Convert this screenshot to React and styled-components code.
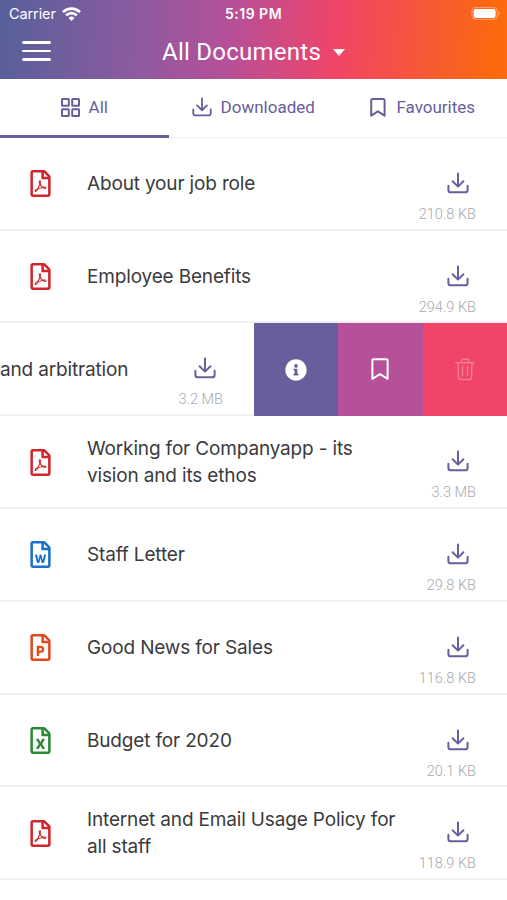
import styled, { createGlobalStyle } from 'styled-components'
import {
  FaInfoCircle,
  FaRegFileExcel,
  FaRegFilePdf,
  FaRegFilePowerpoint,
  FaRegFileWord
} from 'react-icons/fa'

const FILE_TYPES = {
  pdf: { Icon: FaRegFilePdf, color: '#d0252c' },
  word: { Icon: FaRegFileWord, color: '#1a70ca' },
  powerpoint: { Icon: FaRegFilePowerpoint, color: '#e04a1c' },
  excel: { Icon: FaRegFileExcel, color: '#2c8a35' }
}

const DOCUMENTS = [
  { type: 'pdf', lines: ['About your job role'], size: '210.8 KB' },
  { type: 'pdf', lines: ['Employee Benefits'], size: '294.9 KB' },
  { type: 'pdf', lines: ['and arbitration'], size: '3.2 MB', swiped: true },
  { type: 'pdf', lines: ['Working for Companyapp - its', 'vision and its ethos'], size: '3.3 MB' },
  { type: 'word', lines: ['Staff Letter'], size: '29.8 KB' },
  { type: 'powerpoint', lines: ['Good News for Sales'], size: '116.8 KB' },
  { type: 'excel', lines: ['Budget for 2020'], size: '20.1 KB' },
  { type: 'pdf', lines: ['Internet and Email Usage Policy for', 'all staff'], size: '118.9 KB' }
]

function DownloadIcon({ size = 22 }) {
  return (
    <StrokeIcon width={size} height={size} viewBox="0 0 22 22">
      <path d="M11 1.5v13M5.6 9.3l5.4 5.3 5.4-5.3M1.4 13.7v4.2a2.4 2.4 0 0 0 2.4 2.4h14.4a2.4 2.4 0 0 0 2.4-2.4v-4.2" />
    </StrokeIcon>
  )
}

function GridIcon() {
  return (
    <StrokeIcon width="19" height="19" viewBox="0 0 19 19">
      <rect x="1" y="1" width="6.8" height="6.8" rx="0.6" />
      <rect x="11.2" y="1" width="6.8" height="6.8" rx="0.6" />
      <rect x="1" y="11.2" width="6.8" height="6.8" rx="0.6" />
      <rect x="11.2" y="11.2" width="6.8" height="6.8" rx="0.6" />
    </StrokeIcon>
  )
}

function BookmarkIcon() {
  return (
    <StrokeIcon width="18" height="19" viewBox="0 0 18 19">
      <path d="M2.5 1h10.8a1.3 1.3 0 0 1 1.3 1.3v15.4l-6.7-4.4-6.7 4.4V2.3A1.3 1.3 0 0 1 2.5 1z" />
    </StrokeIcon>
  )
}

function SquareBookmarkIcon() {
  return (
    <StrokeIcon width="18" height="23" viewBox="0 0 18 23">
      <path d="M2.3 1.2h13.4a.9.9 0 0 1 .9.9v18.7L9 16.2l-7.6 4.6V2.1a.9.9 0 0 1 .9-.9z" />
    </StrokeIcon>
  )
}

function TrashIcon() {
  return (
    <StrokeIcon width="20" height="23" viewBox="0 0 20 23" strokeWidth="1.5">
      <path d="M.8 4.8h18.4M3 5l.6 15.2a1.4 1.4 0 0 0 1.4 1.3h10a1.4 1.4 0 0 0 1.4-1.3L17 5M6 4.6l.7-2.5a1.2 1.2 0 0 1 1.2-.9h4.2a1.2 1.2 0 0 1 1.2.9l.7 2.5M7.5 8.5v9M12.5 8.5v9" />
    </StrokeIcon>
  )
}

function WifiIcon() {
  return (
    <svg width="19" height="14" viewBox="0 0 19 14" fill="none" stroke="#fff" strokeWidth="2.7">
      <path d="M1 5.1a12.2 12.2 0 0 1 17 0M4.1 8.4a7.7 7.7 0 0 1 10.8 0" />
      <path d="M9.5 14l-3-3.1a4.4 4.4 0 0 1 6 0z" fill="#fff" stroke="none" />
    </svg>
  )
}

function BatteryIcon() {
  return (
    <svg width="30" height="13" viewBox="0 0 30 13" fill="none">
      <rect x="0.9" y="0.6" width="25.4" height="11.8" rx="3.4" stroke="#fff" strokeOpacity="0.4" />
      <rect x="2.6" y="2" width="22" height="9" rx="2.2" fill="#fff" />
      <path d="M27.6 4.3c1.5.5 1.5 3.9 0 4.4z" fill="#fff" fillOpacity="0.45" />
    </svg>
  )
}

function DocumentRow({ type, lines, size, swiped }) {
  const { Icon, color } = FILE_TYPES[type]

  return (
    <Row>
      <RowContent $swiped={swiped}>
        {swiped ? null : (
          <FileType $color={color}>
            <Icon size={27} />
          </FileType>
        )}
        <Name>
          {lines.map((line) => (
            <NameLine key={line}>{line}</NameLine>
          ))}
        </Name>
        <Download>
          <DownloadIcon />
          <Size>{size}</Size>
        </Download>
      </RowContent>
      {swiped ? (
        <Actions>
          <Action $background="#685e9c">
            <FaInfoCircle size={22} />
          </Action>
          <Action $background="#b55099">
            <SquareBookmarkIcon />
          </Action>
          <Action $background="#f04468" $disabled>
            <TrashIcon />
          </Action>
        </Actions>
      ) : null}
    </Row>
  )
}

export default function App() {
  return (
    <Screen>
      <GlobalStyle />
      <Header>
        <StatusBar>
          <Carrier>
            Carrier <WifiIcon />
          </Carrier>
          <Clock>5:19 PM</Clock>
          <Battery>
            <BatteryIcon />
          </Battery>
        </StatusBar>
        <TitleBar>
          <MenuButton aria-label="Menu">
            <MenuLine />
            <MenuLine />
            <MenuLine />
          </MenuButton>
          <Title>
            <TitleText>All Documents</TitleText>
            <Caret />
          </Title>
        </TitleBar>
      </Header>
      <Tabs>
        <Tab $active>
          <GridIcon />
          <TabLabel>All</TabLabel>
        </Tab>
        <Tab>
          <DownloadIcon size={20} />
          <TabLabel>Downloaded</TabLabel>
        </Tab>
        <Tab>
          <BookmarkIcon />
          <TabLabel>Favourites</TabLabel>
        </Tab>
      </Tabs>
      <List>
        {DOCUMENTS.map((item) => (
          <DocumentRow key={item.lines[0]} {...item} />
        ))}
      </List>
    </Screen>
  )
}

const GlobalStyle = createGlobalStyle`
  * {
    box-sizing: border-box;
  }

  body {
    margin: 0;
    background: #ffffff;
  }
`

const Screen = styled.div`
  width: 507px;
  height: 900px;
  overflow: hidden;
  background: #ffffff;
  font-family: Roboto, sans-serif;
`

const Header = styled.header`
  height: 79px;
  background: linear-gradient(95deg, #56609a 0%, #8a5b9f 26%, #b55099 45%, #f04468 66%, #fb6a0c 98%);
  color: #ffffff;
`

const StatusBar = styled.div`
  display: grid;
  grid-template-columns: 1fr auto 1fr;
  align-items: center;
  height: 27px;
  padding: 0 6px;
  font-family: Inter, sans-serif;
  font-size: 14.5px;
`

const Carrier = styled.div`
  display: flex;
  align-items: center;
  gap: 6px;
  padding-left: 3px;
  letter-spacing: -0.1px;
`

const Clock = styled.div`
  font-size: 14px;
  font-weight: 600;
  letter-spacing: 0.5px;
`

const Battery = styled.div`
  display: flex;
  justify-content: flex-end;
`

const TitleBar = styled.div`
  display: grid;
  grid-template-columns: 140px 1fr;
  align-items: center;
  height: 48px;
  padding-left: 22px;
`

const MenuButton = styled.button`
  display: flex;
  flex-direction: column;
  gap: 6px;
  width: 29px;
  padding: 0;
  border: 0;
  background: none;
`

const MenuLine = styled.span`
  height: 2.7px;
  border-radius: 2px;
  background: #ffffff;
`

const Title = styled.div`
  display: flex;
  align-items: center;
  gap: 12px;
  padding-top: 2px;
`

const TitleText = styled.h1`
  margin: 0;
  font-size: 24px;
  font-weight: 400;
  letter-spacing: 0.25px;
  line-height: 30px;
`

const Caret = styled.span`
  border-top: 7px solid #ffffff;
  border-right: 6px solid transparent;
  border-left: 6px solid transparent;
`

const Tabs = styled.nav`
  display: grid;
  grid-template-columns: repeat(3, 1fr);
  height: 58.75px;
  border-bottom: 1px solid #f2f2f4;
`

const Tab = styled.div`
  display: flex;
  align-items: center;
  justify-content: center;
  gap: 8.5px;
  height: 59px;
  border-bottom: 3px solid ${(props) => (props.$active ? '#685e9c' : 'transparent')};
  color: #685e9c;
`

const TabLabel = styled.span`
  font-size: 17px;
`

const List = styled.main`
  overflow: hidden;
`

const Row = styled.article`
  display: flex;
  height: 92.8px;
  border-bottom: 2px solid #f0f0f1;
`

const RowContent = styled.div`
  display: grid;
  flex: none;
  grid-template-columns: ${(props) => (props.$swiped ? '1fr auto' : '57px 1fr auto')};
  width: ${(props) => (props.$swiped ? '254px' : '507px')};
  padding: 1px 31px 0 ${(props) => (props.$swiped ? 0 : '30px')};
`

const FileType = styled.div`
  display: flex;
  align-items: center;
  color: ${(props) => props.$color};

  svg {
    margin-left: -3px;
  }
`

const Name = styled.div`
  display: flex;
  flex-direction: column;
  justify-content: center;
  color: #3b3b3d;
  font-family: Inter, sans-serif;
  font-size: 19px;
  letter-spacing: -0.16px;
  line-height: 27px;
`

const NameLine = styled.span`
  white-space: nowrap;
`

const Download = styled.div`
  display: flex;
  flex-direction: column;
  align-items: flex-end;
  padding-top: 33px;
  color: #685e9c;

  svg {
    margin-right: 7px;
  }
`

const Size = styled.span`
  margin-top: 12px;
  color: #a9a9ac;
  font-size: 14.5px;
  font-weight: 300;
  line-height: 18px;
`

const Actions = styled.div`
  display: grid;
  flex: none;
  grid-template-columns: repeat(3, 1fr);
  width: 253px;
  height: 92.8px;
`

const Action = styled.div`
  display: flex;
  align-items: center;
  justify-content: center;
  background: ${(props) => props.$background};
  color: ${(props) => (props.$disabled ? 'rgba(255, 255, 255, 0.3)' : '#ffffff')};
`

const StrokeIcon = styled.svg`
  flex: none;
  overflow: visible;
  fill: none;
  stroke: currentColor;
  stroke-width: ${(props) => props.strokeWidth || 2};
  stroke-linecap: round;
  stroke-linejoin: round;
`
